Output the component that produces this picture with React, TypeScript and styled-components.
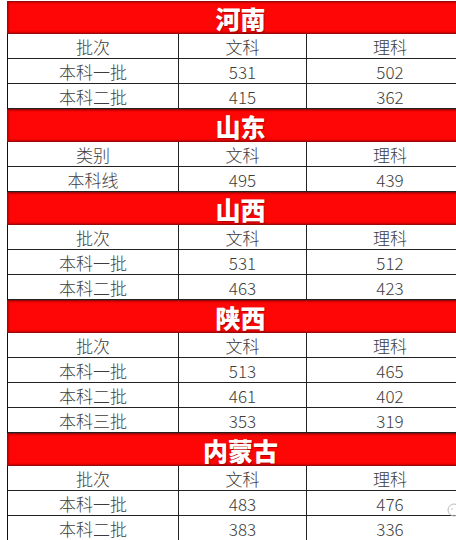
import React from "react";
import styled, { createGlobalStyle } from "styled-components";

const GlobalStyle = createGlobalStyle`
  html, body {
    margin: 0;
    padding: 0;
    background: #fff;
    overflow: hidden;
  }
  body {
    font-family: "Noto Sans CJK SC", "Noto Sans", sans-serif;
  }
`;

const Page = styled.div`
  position: relative;
  width: 456px;
  height: 540px;
  overflow: hidden;
  padding-top: 1px;
  padding-left: 7px;
  box-sizing: border-box;
`;

const Sheet = styled.div`
  width: 466px;
  border-left: 1px solid #111;
  display: flex;
  flex-direction: column;
`;

const Header = styled.div`
  height: 33px;
  margin-left: -1px;
  box-sizing: border-box;
  background: #ff0606;
  border: 1px solid #9a0a0a;
  box-shadow: inset 0 0 2px 1px #c40000;
  display: flex;
  align-items: center;
  justify-content: center;
  color: #fff;
  font-size: 25px;
  font-weight: 900;
  text-shadow: 1px 1px 1px rgba(110, 0, 0, 0.55);
`;

const Row = styled.div`
  display: grid;
  grid-template-columns: 171px 128px 166px;
  height: 25px;
  box-sizing: border-box;
  border-bottom: 1px solid #222;
`;

const Cell = styled.div<{ $last?: boolean }>`
  display: flex;
  align-items: center;
  justify-content: center;
  box-sizing: border-box;
  border-right: ${(p) => (p.$last ? "none" : "1px solid #222")};
  color: #3c3c3c;
  font-size: 17px;
  font-weight: 300;
  line-height: 1;
  padding-top: 1px;
`;

const Mark = styled.svg`
  position: absolute;
  right: -6px;
  top: 502px;
`;

type Region = {
  name: string;
  head: string;
  rows: [string, string, string][];
};

const regions: Region[] = [
  { name: "河南", head: "批次", rows: [["本科一批", "531", "502"], ["本科二批", "415", "362"]] },
  { name: "山东", head: "类别", rows: [["本科线", "495", "439"]] },
  { name: "山西", head: "批次", rows: [["本科一批", "531", "512"], ["本科二批", "463", "423"]] },
  {
    name: "陕西",
    head: "批次",
    rows: [["本科一批", "513", "465"], ["本科二批", "461", "402"], ["本科三批", "353", "319"]],
  },
  { name: "内蒙古", head: "批次", rows: [["本科一批", "483", "476"], ["本科二批", "383", "336"], ["", "", ""]] },
];

const App: React.FC = () => {
  return (
    <Page>
      <GlobalStyle />
      <Sheet>
        {regions.map((r) => (
          <React.Fragment key={r.name}>
            <Header>{r.name}</Header>
            <Row>
              <Cell>{r.head}</Cell>
              <Cell>文科</Cell>
              <Cell $last>理科</Cell>
            </Row>
            {r.rows.map((row, i) => (
              <Row key={i}>
                <Cell>{row[0]}</Cell>
                <Cell>{row[1]}</Cell>
                <Cell $last>{row[2]}</Cell>
              </Row>
            ))}
          </React.Fragment>
        ))}
      </Sheet>
      <Mark width="16" height="16" viewBox="0 0 16 16">
        <circle cx="8" cy="8" r="6" fill="none" stroke="#bbb" strokeWidth="1" />
        <circle cx="6" cy="7" r="0.8" fill="#bbb" />
      </Mark>
    </Page>
  );
};

export default App;
